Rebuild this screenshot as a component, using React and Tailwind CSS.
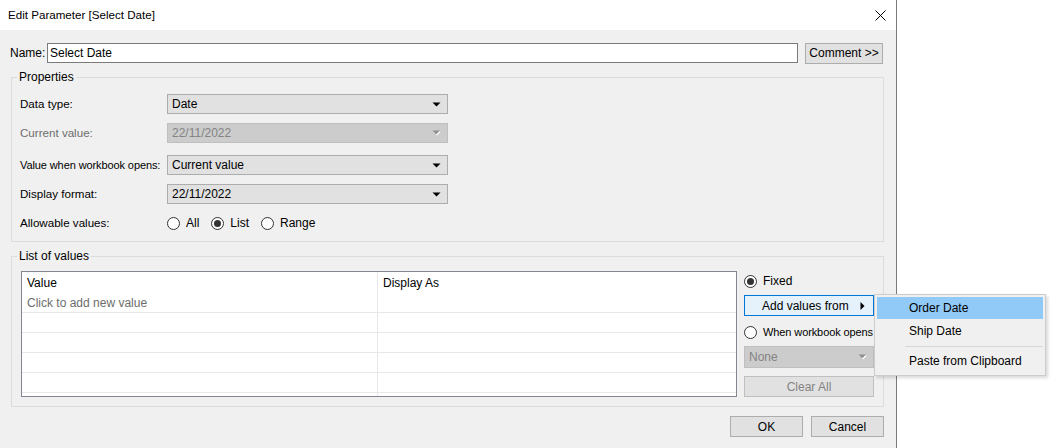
import React from 'react';

const font = { fontFamily: '"Liberation Sans", Arial, sans-serif' };

function DropArrow({ disabled }) {
  return disabled ? (
    <svg width="9" height="6" viewBox="0 0 9 6">
      <path d="M0.5 0.5 H8.5 L4.5 4.5 Z" fill="#8f8f8f" />
      <path d="M4.5 5 L8 1.5" stroke="#ffffff" strokeWidth="1.2" />
    </svg>
  ) : (
    <svg width="9" height="5" viewBox="0 0 9 5">
      <path d="M0.5 0.5 H8.5 L4.5 4.5 Z" fill="#000" />
    </svg>
  );
}

function Select({ value, disabled, width = 'w-[281px]' }) {
  return (
    <div
      className={`${width} h-[20px] flex items-center justify-between pl-[4px] pr-[6px] border ${
        disabled ? 'bg-[#cccccc] border-[#bfbfbf] text-[#838383]' : 'bg-[#e1e1e1] border-[#adadad] text-black'
      }`}
    >
      <span>{value}</span>
      <DropArrow disabled={disabled} />
    </div>
  );
}

function Radio({ checked, label, className = '' }) {
  return (
    <div className={`flex items-center gap-[6px] whitespace-nowrap ${className}`}>
      <div className="w-[13px] h-[13px] shrink-0 rounded-full border border-[#333] bg-white flex items-center justify-center">
        {checked && <div className="w-[7px] h-[7px] rounded-full bg-[#333]" />}
      </div>
      <span>{label}</span>
    </div>
  );
}

function Button({ children, className = '' }) {
  return (
    <div className={`h-[21px] flex items-center justify-center border border-[#adadad] bg-[#e1e1e1] ${className}`}>
      {children}
    </div>
  );
}

function Row({ label, children, muted, className = '', labelClass = 'text-[11.6px]' }) {
  return (
    <div className={`flex items-center ${className}`}>
      <div className={`w-[147px] shrink-0 whitespace-nowrap ${labelClass} ${muted ? 'text-[#6d6d6d]' : ''}`}>{label}</div>
      {children}
    </div>
  );
}

export default function App() {
  return (
    <div className="w-[1053px] h-[448px] bg-white flex text-[12px] leading-[16px] text-black overflow-hidden" style={font}>
      <div className="w-[897px] h-[448px] border-r border-[#7a7a7a] flex flex-col relative">
        {/* title bar */}
        <div className="h-[30px] bg-white flex items-center justify-between pl-[8px] pr-[10px] shrink-0">
          <span className="text-[11.6px]">Edit Parameter [Select Date]</span>
          <svg width="11" height="11" viewBox="0 0 11 11">
            <path d="M0.5 0.5 L10.5 10.5 M10.5 0.5 L0.5 10.5" stroke="#000" strokeWidth="1" />
          </svg>
        </div>

        <div className="flex-1 bg-[#f0f0f0] pl-[11px] pr-[12px]">
          {/* name row */}
          <div className="flex items-center mt-[13px] h-[20px]">
            <span className="w-[37px] -ml-[1px]">Name:</span>
            <div className="w-[751px] h-[20px] bg-white border border-[#7a7a7a] flex items-center pl-[2px]">Select Date</div>
            <Button className="ml-[7px] w-[78px] h-[20px]">Comment &gt;&gt;</Button>
          </div>

          {/* properties */}
          <fieldset className="mt-[6px] w-[873px] h-[173px] border border-[#dcdcdc] pl-[8px] pr-[8px]">
            <legend className="-ml-[3px] px-[2px]">Properties</legend>
            <Row label="Data type:" className="mt-[9px]">
              <Select value="Date" />
            </Row>
            <Row label="Current value:" muted className="mt-[9px]">
              <Select value="22/11/2022" disabled />
            </Row>
            <Row label="Value when workbook opens:" labelClass="text-[11px] tracking-[-0.1px]" className="mt-[12px]">
              <Select value="Current value" />
            </Row>
            <Row label="Display format:" className="mt-[9px]">
              <Select value="22/11/2022" />
            </Row>
            <Row label="Allowable values:" className="mt-[9px] h-[20px]">
              <div className="flex items-center gap-[12px]">
                <Radio label="All" />
                <Radio label="List" checked />
                <Radio label="Range" />
              </div>
            </Row>
          </fieldset>

          {/* list of values */}
          <fieldset className="mt-[6px] w-[873px] h-[159px] border border-[#dcdcdc] pl-[9px]">
            <legend className="-ml-[4px] px-[2px]">List of values</legend>
            <div className="flex mt-[7px] gap-[7px]">
              <div className="w-[716px] h-[126px] bg-white border border-[#828790] flex overflow-hidden">
                <div className="w-[356px] border-r border-[#e8e8e8] flex flex-col">
                  <div className="h-[21px] shrink-0 flex items-center pl-[5px]">Value</div>
                  <div className="h-[20px] shrink-0 flex items-center pl-[5px] text-[#6d6d6d] border-b border-[#e8e8e8]">Click to add new value</div>
                  {[0, 1, 2, 3].map(i => (
                    <div key={i} className="h-[20px] border-b border-[#e8e8e8] shrink-0" />
                  ))}
                </div>
                <div className="flex-1 flex flex-col">
                  <div className="h-[21px] shrink-0 flex items-center pl-[5px]">Display As</div>
                  <div className="h-[20px] shrink-0 border-b border-[#e8e8e8]" />
                  {[0, 1, 2, 3].map(i => (
                    <div key={i} className="h-[20px] border-b border-[#e8e8e8] shrink-0" />
                  ))}
                </div>
              </div>

              <div className="w-[130px] flex flex-col">
                <div className="h-[20px] flex items-center">
                  <Radio label="Fixed" checked />
                </div>
                <div className="mt-[4px] h-[21px] border border-[#0078d7] bg-[#e5f1fb] flex items-center pl-[17px] pr-[8px] justify-between">
                  <span>Add values from</span>
                  <svg width="5" height="8" viewBox="0 0 5 8">
                    <path d="M0.5 0 L4.5 4 L0.5 8 Z" fill="#000" />
                  </svg>
                </div>
                <div className="mt-[6px] h-[20px] flex items-center">
                  <Radio label="When workbook opens" className="text-[11px] tracking-[-0.1px]" />
                </div>
                <div className="mt-[4px]">
                  <Select value="None" disabled width="w-[130px] h-[22px]" />
                </div>
                <Button className="mt-[8px] w-[130px] bg-[#cccccc] border-[#bfbfbf] text-[#838383]">Clear All</Button>
              </div>
            </div>
          </fieldset>

          {/* footer */}
          <div className="flex justify-end gap-[8px] mt-[9px] w-[873px]">
            <Button className="w-[73px]">OK</Button>
            <Button className="w-[73px]">Cancel</Button>
          </div>
        </div>

        {/* context menu */}
        <div className="absolute left-[874px] top-[294px] w-[172px] h-[82px] bg-[#f0f0f0] border border-[#cccccc] shadow-[2px_2px_3px_rgba(0,0,0,0.15)] p-[2px] z-10">
          <div className="h-[22px] bg-[#91c9f7] flex items-center pl-[32px]">Order Date</div>
          <div className="h-[24px] flex items-center pl-[32px]">Ship Date</div>
          <div className="h-[6px] flex items-center pl-[28px]">
            <div className="h-[1px] w-full bg-[#d7d7d7]" />
          </div>
          <div className="h-[24px] flex items-center pl-[32px]">Paste from Clipboard</div>
        </div>
      </div>
    </div>
  );
}
